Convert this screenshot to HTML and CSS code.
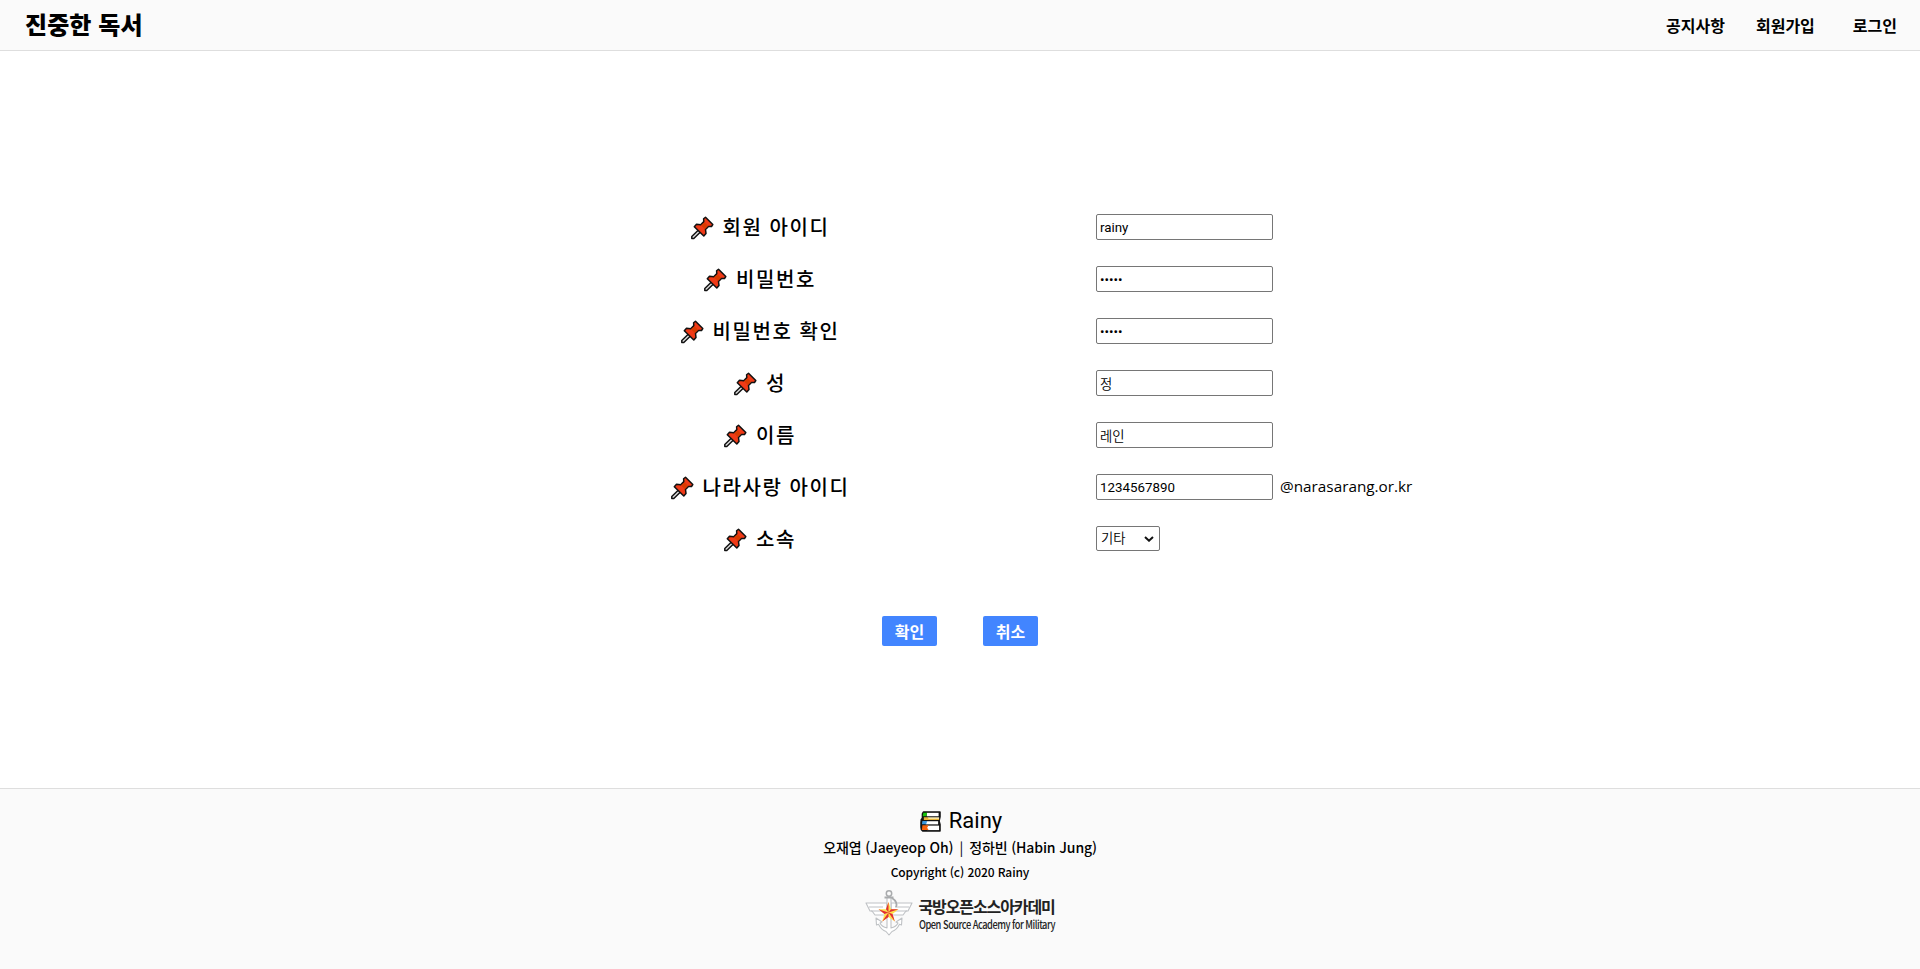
FILE: index.html
```html
<!DOCTYPE html>
<html lang="ko">
<head>
<meta charset="utf-8">
<title>진중한 독서</title>
<link rel="stylesheet" href="styles.css">
</head>
<body>
<svg class="defs" width="0" height="0">
  <symbol id="pin" viewBox="0 0 24 24">
    <path d="M9.500 13 1.800 20.500V22.500h2L11.500 15z" fill="#ddd" stroke="#111" stroke-width="1.500" stroke-linejoin="round"/>
    <path d="M15.500 1.200 22.800 8.500 21.500 10.500 18.500 10.500 15.500 13.500 16 17.500 13.800 20 4.300 10.700 6.500 8.300 10.700 8.700 13.800 5.600 13.600 2.800z" fill="#f03a17" stroke="#111" stroke-width="1.500" stroke-linejoin="round"/>
    <path d="M14.600 6.200 18 9.800 14.800 13 11 9.300z" fill="#d83b01"/>
  </symbol>
</svg>
<header class="header">
  <h1 class="brand">진중한 독서</h1>
  <nav class="nav"><a>공지사항</a><a>회원가입</a><a>로그인</a></nav>
</header>
<main class="main">
  <form class="form">
    <div class="row"><label class="label"><svg class="pin"><use href="#pin"/></svg>회원 아이디</label><div class="field"><input class="input" type="text" value="rainy"></div></div>
    <div class="row"><label class="label"><svg class="pin"><use href="#pin"/></svg>비밀번호</label><div class="field"><input class="input password" type="password" value="rainy"></div></div>
    <div class="row"><label class="label"><svg class="pin"><use href="#pin"/></svg>비밀번호 확인</label><div class="field"><input class="input password" type="password" value="rainy"></div></div>
    <div class="row"><label class="label"><svg class="pin"><use href="#pin"/></svg>성</label><div class="field"><input class="input light" type="text" value="정"></div></div>
    <div class="row"><label class="label"><svg class="pin"><use href="#pin"/></svg>이름</label><div class="field"><input class="input light" type="text" value="레인"></div></div>
    <div class="row"><label class="label"><svg class="pin"><use href="#pin"/></svg>나라사랑 아이디</label><div class="field"><input class="input" type="text" value="1234567890"><span class="domain">@narasarang.or.kr</span></div></div>
    <div class="row"><label class="label"><svg class="pin"><use href="#pin"/></svg>소속</label><div class="field"><div class="select"><span>기타</span><svg class="chevron" viewBox="0 0 10 6"><path d="M1 1l4 3.700L9 1" fill="none" stroke="#111" stroke-width="2"/></svg></div></div></div>
  </form>
  <div class="actions"><button class="button">확인</button><button class="button">취소</button></div>
</main>
<footer class="footer">
  <div class="team">
    <svg class="books" viewBox="0 0 22 22">
      <path d="M3.500 1H21V6L20 10.500 21 14V21H3Q.8 19.500 1 17V12Q.8 8.500 2.500 7.500V3z" fill="#111" stroke="#111" stroke-width="1.500" stroke-linejoin="round"/>
      <path d="M7 1.900h12.500v3.600H7z" fill="#fff"/><path d="M3.500 1.900H7.500L6.500 5.500H2.800z" fill="#16c60c"/>
      <path d="M8 6.600h12v2.200H8z" fill="#fff4c0"/><path d="M4 6.600h4l1 1.400h11v1.500H4z" fill="#e8b53a"/>
      <path d="M6 10.700h13v3.300H6z" fill="#fff"/><path d="M2.500 10.500h5L6.500 14H2z" fill="#3a96dd"/>
      <path d="M7 15.300h13v4.700H7z" fill="#fff"/><path d="M2.500 15h6.500L7.500 17.500 9 20H2z" fill="#f7630c"/>
    </svg>
    <span class="team-name">Rainy</span>
  </div>
  <p class="members">오재엽 (Jaeyeop Oh)<span class="bar">|</span>정하빈 (Habin Jung)</p>
  <p class="copyright">Copyright (c) 2020 Rainy</p>
  <div class="academy">
    <svg class="emblem" viewBox="0 0 48 46">
      <g fill="#fff" stroke="#bfc2c5" stroke-width="1.100" stroke-linejoin="round">
        <path d="M1 13h21v12H10l-3-4H5z"/>
        <path d="M47 13H26v12h12l3-4h2z"/>
        <path d="M4 17h14M6 21h12M44 17H30M42 21H30" fill="none"/>
        <path d="M22 7h4v31q5-1 7-5l-2-1 6-4-.5 7-2-.7q-3 6-7.500 7.200L24 45l-3-3.500q-4.500-1.200-7.500-7.200l-2 .7-.5-7 6 4-2 1q2 4 7 5z"/>
      </g>
      <circle cx="24" cy="3.500" r="2.700" fill="none" stroke="#a9abad" stroke-width="1.500"/>
      <path d="M19.500 7.500h9M27 8q6 4 4 9" fill="none" stroke="#a9abad" stroke-width="1.800"/>
      <path d="M23.500 12l2.500 7.200h7.500l-6 4.700 2.300 7.600-6.300-4.500-6.300 4.500 2.300-7.600-6-4.700H21z" fill="#ffe14b"/>
      <path d="M23.500 12v10.500L21 19.200zM33.500 19.200l-10 3.300 2.500-3.300zM29.800 31.500l-6.300-9 4 1.400zM17.200 31.500l6.300-9v4.500zM13.500 19.200l10 3.300-4 1.400z" fill="#e22e35"/>
    </svg>
    <div class="academy-text"><strong>국방오픈소스아카데미</strong><span>Open Source Academy for Military</span></div>
  </div>
</footer>
</body>
</html>
```
FILE: styles.css
```css
* { box-sizing: border-box; }
body { margin: 0; height: 969px; display: flex; flex-direction: column; overflow: hidden; background: #fff; color: #000; font-family: "Noto Sans CJK KR", "Noto Sans", sans-serif; }
.defs { position: absolute; }
.header { height: 51px; flex: none; display: flex; justify-content: space-between; background: #fafafa; border-bottom: 1px solid #dedede; padding: 0 23px 0 25px; }
.brand { margin: 0; font-size: 24px; line-height: 47px; font-weight: 900; letter-spacing: 0.1px; white-space: nowrap; }
.nav { display: flex; font-size: 16px; font-weight: 700; line-height: 51px; white-space: nowrap; }
.nav a:nth-child(2) { margin-left: 31px; }
.nav a:nth-child(3) { margin-left: 38px; }
.main { height: 737px; flex: none; padding-top: 150px; }
.form { width: 1120px; margin: 0 auto 0 480px; }
.row { display: grid; grid-template-columns: 560px 1fr; height: 52px; align-items: center; }
.label { display: flex; align-items: center; justify-content: center; font-size: 20px; line-height: 30px; letter-spacing: 1.55px; font-weight: 500; white-space: nowrap; }
.pin { width: 24px; height: 24px; margin: 2px 9px 0 -1px; }
.field { display: flex; align-items: center; padding-left: 56px; }
.input { width: 177px; height: 26px; padding: 1px 3px; border: 1px solid #767676; border-radius: 2px; background: #fff; color: #000; font-family: Roboto, "Noto Sans CJK KR", sans-serif; font-size: 13.333px; outline: 0; }
.light { font-family: "Noto Sans CJK KR", sans-serif; font-weight: 350; }
.domain { margin: -3px 0 0 7px; font-family: "Open Sans", "Noto Sans", sans-serif; font-size: 15.3px; white-space: nowrap; }
.select { display: flex; align-items: center; justify-content: space-between; width: 64px; height: 25px; margin-bottom: 1px; padding: 0 5px 2px 4px; border: 1px solid #767676; border-radius: 2px; font-size: 13.333px; font-weight: 350; }
.chevron { width: 10px; height: 6px; margin-top: 2px; }
.actions { display: flex; justify-content: center; gap: 46px; margin-top: 51px; }
.button { width: 55px; height: 30px; padding: 0; border: 0; border-radius: 2px; background: #4285ff; color: #fff; font-family: "Noto Sans CJK KR", sans-serif; font-size: 16px; font-weight: 700; line-height: 30px; }
.footer { flex: 1; border-top: 1px solid #dedede; background: #fafafa; display: flex; flex-direction: column; align-items: center; padding-top: 16px; }
.team { display: flex; align-items: center; height: 32px; padding-left: 2px; }
.books { width: 21px; height: 21px; margin-right: 8px; }
.team-name { font-family: Roboto, sans-serif; font-size: 22px; line-height: 32px; }
.members { margin: 0; font-size: 14px; font-weight: 500; line-height: 21px; letter-spacing: -0.12px; white-space: nowrap; }
.bar { margin: 0 6px; font-weight: 400; }
.copyright { margin: 5px 0 0; font-size: 12px; font-weight: 500; line-height: 18px; letter-spacing: -0.1px; }
.academy { display: flex; margin-top: 7px; height: 50px; align-items: center; }
.emblem { width: 48px; height: 46px; margin-right: 6px; }
.academy-text { display: flex; flex-direction: column; width: 137px; white-space: nowrap; color: #222; }
.academy-text strong { font-size: 16px; line-height: 21px; letter-spacing: -1.1px; }
.academy-text span { width: max-content; font-size: 11.5px; line-height: 14px; font-weight: 500; letter-spacing: -0.6px; transform: scaleX(0.805); transform-origin: left; }
```
